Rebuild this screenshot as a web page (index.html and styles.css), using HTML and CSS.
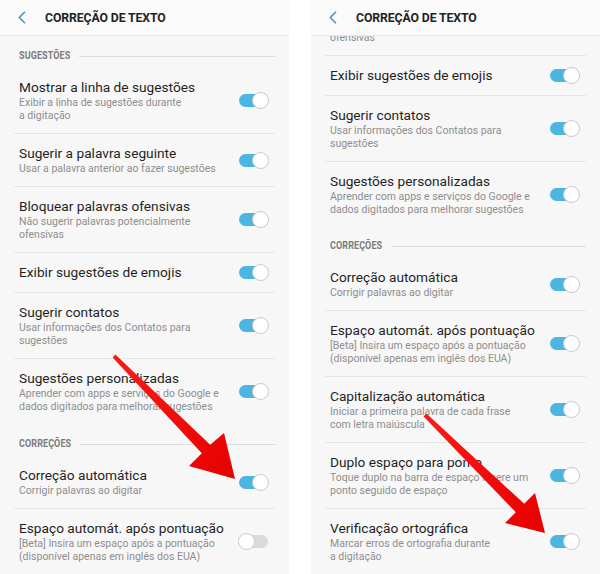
FILE: index.html
```html
<!DOCTYPE html>
<html lang="pt-BR">
<head>
<meta charset="utf-8">
<link rel="stylesheet" href="styles.css">
</head>
<body>
<div class="screens">
  <div class="panel">
    <div class="appbar">
      <svg class="back" width="8" height="13" viewBox="0 0 8 13"><path d="M7 0.8 L1.3 6.5 L7 12.2" fill="none" stroke="#3f8fae" stroke-width="1.4"/></svg>
      <span class="title">CORREÇÃO DE TEXTO</span>
    </div>
    <div class="viewport">
      <div class="list">
        <div class="section"><span class="label">SUGESTÕES</span><span class="line"></span></div>
        <div class="row"><div class="text"><div class="name">Mostrar a linha de sugestões</div><div class="sub">Exibir a linha de sugestões durante<br>a digitação</div></div><div class="toggle on"><span class="knob"></span></div></div>
        <div class="row"><div class="text"><div class="name">Sugerir a palavra seguinte</div><div class="sub">Usar a palavra anterior ao fazer sugestões</div></div><div class="toggle on"><span class="knob"></span></div></div>
        <div class="row"><div class="text"><div class="name">Bloquear palavras ofensivas</div><div class="sub">Não sugerir palavras potencialmente<br>ofensivas</div></div><div class="toggle on"><span class="knob"></span></div></div>
        <div class="row"><div class="text"><div class="name">Exibir sugestões de emojis</div></div><div class="toggle on"><span class="knob"></span></div></div>
        <div class="row"><div class="text"><div class="name">Sugerir contatos</div><div class="sub">Usar informações dos Contatos para<br>sugestões</div></div><div class="toggle on"><span class="knob"></span></div></div>
        <div class="row last"><div class="text"><div class="name">Sugestões personalizadas</div><div class="sub">Aprender com apps e serviços do Google e<br>dados digitados para melhorar sugestões</div></div><div class="toggle on"><span class="knob"></span></div></div>
        <div class="section"><span class="label">CORREÇÕES</span><span class="line"></span></div>
        <div class="row"><div class="text"><div class="name">Correção automática</div><div class="sub">Corrigir palavras ao digitar</div></div><div class="toggle on"><span class="knob"></span></div></div>
        <div class="row"><div class="text"><div class="name">Espaço automát. após pontuação</div><div class="sub">[Beta] Insira um espaço após a pontuação<br>(disponível apenas em inglês dos EUA)</div></div><div class="toggle off"><span class="knob"></span></div></div>
      </div>
    </div>
  </div>
  <div class="panel">
    <div class="appbar">
      <svg class="back" width="8" height="13" viewBox="0 0 8 13"><path d="M7 0.8 L1.3 6.5 L7 12.2" fill="none" stroke="#3f8fae" stroke-width="1.4"/></svg>
      <span class="title">CORREÇÃO DE TEXTO</span>
    </div>
    <div class="viewport">
      <div class="list scrolled">
        <div class="row tail"><div class="text"><div class="sub">ofensivas</div></div></div>
        <div class="row"><div class="text"><div class="name">Exibir sugestões de emojis</div></div><div class="toggle on"><span class="knob"></span></div></div>
        <div class="row"><div class="text"><div class="name">Sugerir contatos</div><div class="sub">Usar informações dos Contatos para<br>sugestões</div></div><div class="toggle on"><span class="knob"></span></div></div>
        <div class="row last"><div class="text"><div class="name">Sugestões personalizadas</div><div class="sub">Aprender com apps e serviços do Google e<br>dados digitados para melhorar sugestões</div></div><div class="toggle on"><span class="knob"></span></div></div>
        <div class="section"><span class="label">CORREÇÕES</span><span class="line"></span></div>
        <div class="row"><div class="text"><div class="name">Correção automática</div><div class="sub">Corrigir palavras ao digitar</div></div><div class="toggle on"><span class="knob"></span></div></div>
        <div class="row"><div class="text"><div class="name">Espaço automát. após pontuação</div><div class="sub">[Beta] Insira um espaço após a pontuação<br>(disponível apenas em inglês dos EUA)</div></div><div class="toggle on"><span class="knob"></span></div></div>
        <div class="row"><div class="text"><div class="name">Capitalização automática</div><div class="sub">Iniciar a primeira palavra de cada frase<br>com letra maiúscula</div></div><div class="toggle on"><span class="knob"></span></div></div>
        <div class="row"><div class="text"><div class="name">Duplo espaço para ponto</div><div class="sub">Toque duplo na barra de espaço insere um<br>ponto seguido de espaço</div></div><div class="toggle on"><span class="knob"></span></div></div>
        <div class="row"><div class="text"><div class="name">Verificação ortográfica</div><div class="sub">Marcar erros de ortografia durante<br>a digitação</div></div><div class="toggle on"><span class="knob"></span></div></div>
      </div>
    </div>
  </div>
</div>
<svg class="arrows" width="600" height="574" viewBox="0 0 600 574">
  <defs>
    <linearGradient id="red" x1="0" y1="0" x2="1" y2="1">
      <stop offset="0" stop-color="#ff1a1a"/>
      <stop offset="1" stop-color="#e60000"/>
    </linearGradient>
  </defs>
  <polygon fill="url(#red)" points="115.4,354.6 210.2,444.8 224,433 235,479 189,466 201.8,453.2 112.6,357.4"/>
  <polygon fill="url(#red)" points="426.4,413.6 524.2,503.8 535,493 545,533 505,523 515.8,512.2 423.6,416.4"/>
</svg>
</body>
</html>
```

FILE: styles.css
```css
html, body {
  margin: 0;
  padding: 0;
  background: #ffffff;
}
body {
  width: 600px;
  height: 574px;
  overflow: hidden;
  position: relative;
  font-family: Roboto, "Noto Sans", "Liberation Sans", sans-serif;
}
.screens {
  display: flex;
  gap: 22px;
  height: 574px;
}
.panel {
  width: 289px;
  height: 574px;
  background: #f7f7f7;
  display: flex;
  flex-direction: column;
  overflow: hidden;
}
.appbar {
  height: 35px;
  flex-shrink: 0;
  display: flex;
  align-items: center;
  padding-left: 18px;
  background: #fafafa;
  border-bottom: 1px solid #e8e8e8;
  position: relative;
  z-index: 1;
}
.back {
  display: block;
}
.title {
  margin-left: 19px;
  font-size: 12.5px;
  font-weight: 700;
  color: #222;
  letter-spacing: -0.1px;
  transform: scaleX(0.98);
  transform-origin: left center;
}
.viewport {
  flex: 1;
  overflow: hidden;
}
.list.scrolled {
  margin-top: -5px;
}
.section {
  display: flex;
  align-items: center;
  gap: 8px;
  padding: 14px 14px 6px 19px;
  height: 12px;
}
.list.scrolled .section {
  padding-top: 13px;
}
.label {
  font-size: 10px;
  font-weight: 700;
  color: #7c7c7c;
  line-height: 12px;
  letter-spacing: 0.1px;
  transform: scaleX(0.9);
  transform-origin: left center;
  margin-right: -5px;
}
.line {
  flex: 1;
  height: 1px;
  background: #dedede;
}
.row {
  margin: 0 14px;
  padding: 11px 7px 11px 5px;
  border-bottom: 1px solid #e6e6e6;
  display: flex;
  align-items: center;
  justify-content: space-between;
}
.row.tail {
  padding-top: 0;
}
.row.last {
  border-bottom: none;
}
.text {
  flex: 1;
  min-width: 0;
}
.name {
  font-size: 13.7px;
  line-height: 17px;
  color: #1f1f1f;
  white-space: nowrap;
}
.sub {
  font-size: 10.5px;
  line-height: 13px;
  color: #8e8e8e;
  white-space: nowrap;
}
.toggle {
  width: 29px;
  height: 13px;
  border-radius: 7px;
  display: flex;
  align-items: center;
  flex-shrink: 0;
}
.toggle.on {
  background: #4db5e1;
  justify-content: flex-end;
}
.toggle.off {
  background: #dadada;
  justify-content: flex-start;
}
.knob {
  width: 17px;
  height: 17px;
  border-radius: 50%;
  background: #fff;
  border: 1px solid #c9c9c9;
  box-sizing: border-box;
  flex-shrink: 0;
}
.toggle.on .knob {
  margin-right: -1px;
}
.toggle.off .knob {
  margin-left: -1px;
}
.arrows {
  position: absolute;
  left: 0;
  top: 0;
  pointer-events: none;
}
```
